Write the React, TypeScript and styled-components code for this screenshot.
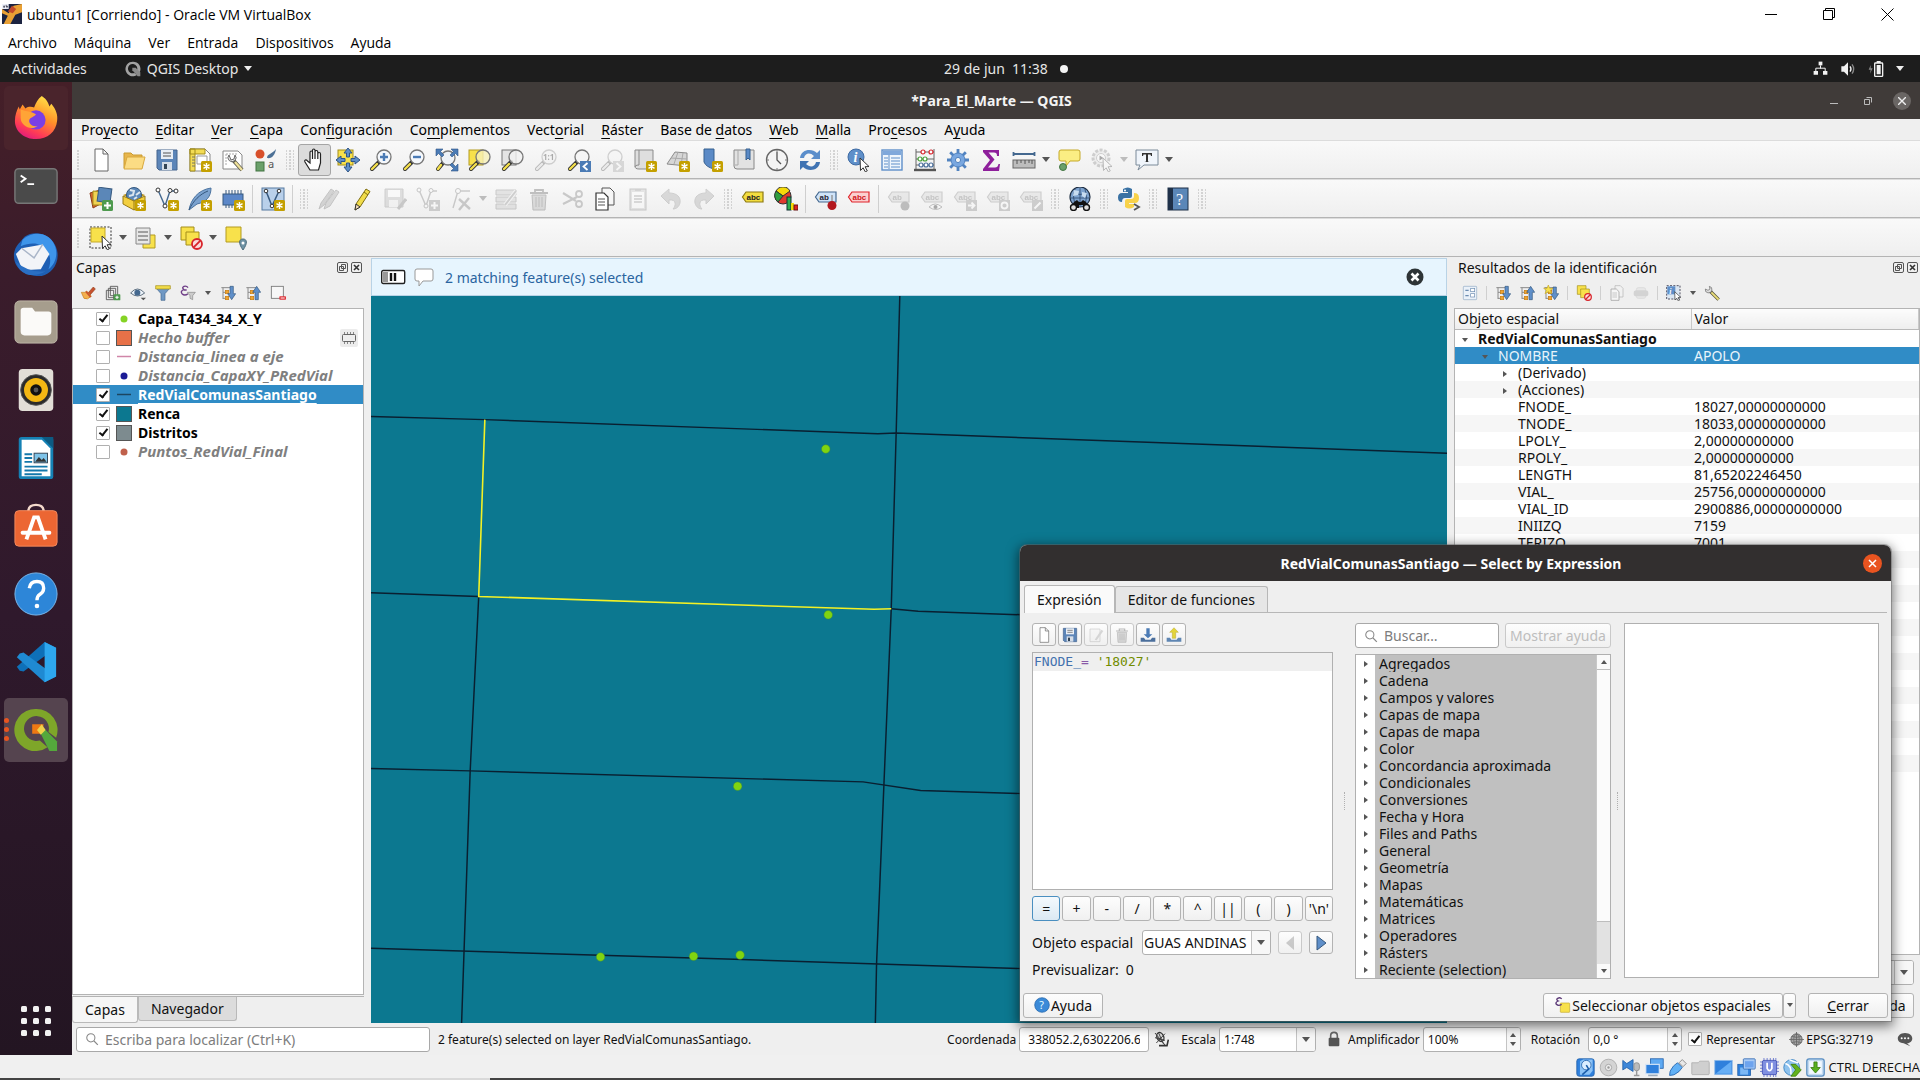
import React from "react";
import styled, { createGlobalStyle, css } from "styled-components";

const UI = `"Noto Sans", "Open Sans", sans-serif`;
const WIN = `"Open Sans", "Noto Sans", sans-serif`;

const GlobalStyle = createGlobalStyle`
  *, *::before, *::after { box-sizing: border-box; }
  body { margin: 0; background: #efefef; font-family: ${UI}; font-size: 14px; color: #111; }
  button, input, select { font: inherit; color: inherit; margin: 0; }
  button { padding: 0; border: 0; background: none; }
  svg { display: block; flex: none; }
`;

/* ------------------------------------------------------------------ icons */

const badge = (
  <g>
    <rect x="13" y="13" width="11" height="11" rx="1.5" fill="#c4a000" />
    <path d="M18.5 15v7M15.5 16.7l6 3.6M21.5 16.7l-6 3.6" stroke="#fff" strokeWidth="1.4" />
  </g>
);
const lens = (fill: string, cx = 15, cy = 9) => (
  <g>
    <path d={`M${cx - 5} ${cy + 5}L3 21`} stroke="#333" strokeWidth="4" strokeLinecap="round" />
    <path d={`M${cx - 7} ${cy + 7}L3 21`} stroke="#f5e04c" strokeWidth="2.4" strokeLinecap="round" />
    <circle cx={cx} cy={cy} r="7" fill={fill} stroke="#777" strokeWidth="1.3" />
  </g>
);
const tag = (fill: string, stroke: string, color: string, text = "abc") => (
  <g>
    <path d="M5 5H22V15H5L1.500 10z" fill={fill} stroke={stroke} strokeWidth="1.200" />
    <text x="5.500" y="13" fontSize="8" fontWeight="700" fill={color} fontFamily="Liberation Sans, sans-serif">{text}</text>
  </g>
);
const cursor = <path d="M13 10l9 8.5-4 .3 2.3 4-2 1-2.2-4-2.6 2.7z" fill="#fff" stroke="#333" />;
const treeLines = (
  <g stroke="#8a8a8a" fill="none">
    <path d="M2 4h15M4.500 4v17M4.500 11h4M4.500 20h4" strokeWidth="1.500" />
    <rect x="8" y="8" width="5" height="5" fill="#f0a430" stroke="#c57b10" />
    <rect x="8" y="17" width="5" height="5" fill="#f0a430" stroke="#c57b10" />
  </g>
);
const forbid = (
  <g>
    <circle cx="18" cy="18" r="5" fill="#fbdada" stroke="#d8232a" strokeWidth="1.8" />
    <path d="M14.600 21.400l6.800-6.800" stroke="#d8232a" strokeWidth="1.8" />
  </g>
);

const glyphs: Record<string, React.ReactNode> = {
  newFile: <path d="M6 1h8l5 5v17H6zM14 1v5h5" fill="#fff" stroke="#666" />,
  folder: <><path d="M2 5h7l2 2h9v13H2z" fill="#e8b64c" stroke="#c99a2e" /><path d="M5 9h18l-3 12H2z" fill="#fbdc84" stroke="#d9a93e" /></>,
  save: <><path d="M2 2h20v20H4l-2-2z" fill="#5c85b8" stroke="#44648e" /><rect x="6" y="2" width="12" height="9" fill="#e9eef5" /><path d="M8 5h8M8 8h8" stroke="#555" /><rect x="7" y="14" width="10" height="8" fill="#d5dde8" /><rect x="9" y="16" width="3" height="5" fill="#345" /></>,
  layoutNew: <><path d="M2 1h15l5 5v17H2z" fill="#fff" stroke="#888" /><path d="M2 1h5v22H2zM2 1h15v5H2z" fill="#f3dc55" stroke="#a48e1a" /><path d="M4 9h3M4 12h3M4 15h3M4 18h3" stroke="#776" /><path d="M9 8h10v8H9z" fill="#fff" stroke="#999" />{badge}</>,
  layoutManager: <><path d="M2 3h15l4 4v14H2z" fill="#fff" stroke="#888" /><path d="M5 6h11M5 6v12" stroke="#aaa" strokeDasharray="2 1" /><path d="M12 12l9 10" stroke="#5c5a4c" strokeWidth="4" /><path d="M14 14l7 8" stroke="#f0e29a" strokeWidth="2.400" /><path d="M8 7a4 4 0 1 0 6 0l-1 4-3 1z" fill="#eee" stroke="#666" /></>,
  style: <><circle cx="6" cy="6" r="4.500" fill="#d8502b" /><path d="M13 10c0-4 5-4 9-9-1 6-4 10-9 9z" fill="#4d7196" /><rect x="2" y="14" width="8" height="9" fill="#6aa06a" stroke="#427542" /><text x="14" y="20" fontSize="11" fill="#555" fontFamily="Noto Sans">a</text></>,
  hand: <path d="M7 22l-5-8c-1-2 1-3 2.500-1L7 15V4.500c0-2 2.500-2 2.500 0V2.500c0-2 2.500-2 2.500 0V4c0-2 2.800-2 2.800 0v2c0-2 2.700-2 2.700 0v9l-2 7zM9.500 4v7M12 3v8M14.800 5v6" fill="#fff" stroke="#222" strokeWidth="1.200" />,
  panSelection: <><rect x="2" y="2" width="15" height="15" fill="#f8e14b" stroke="#a48e1a" /><path d="M12 0l4 5h-2.500v4h-3V5H8zM24 12l-5 4v-2.500h-4v-3h4V8zM12 24l-4-5h2.500v-4h3v4H16zM0 12l5-4v2.500h4v3H5V16z" fill="#5f8fc9" stroke="#2f5686" /></>,
  zoomIn: <>{lens("#f5f8fc")}<path d="M15 5v8M11 9h8" stroke="#4b7bb5" strokeWidth="2.400" /></>,
  zoomOut: <>{lens("#f5f8fc")}<path d="M11 9h8" stroke="#4b7bb5" strokeWidth="2.400" /></>,
  zoomFull: <>{lens("#eef2f7", 13, 10)}<path d="M1 1h7L5.500 3.500 9 7 7 9 3.500 5.500 1 8zM23 1h-7l2.500 2.500L15 7l2 2 3.500-3.500L23 8zM23 23h-7l2.500-2.500L15 17l2-2 3.500 3.500L23 16z" fill="#4b7bb5" stroke="#2f5686" strokeWidth=".6" /></>,
  zoomSelection: <><rect x="1" y="2" width="14" height="15" fill="#f8e14b" stroke="#b39b20" />{lens("#f6f0b8cc")}</>,
  zoomLayer: <><rect x="1" y="2" width="14" height="15" fill="#e4e4e4" stroke="#777" />{lens("#f1f1f1cc")}</>,
  zoomNative: <>{lens("#f1f1f1")}<text x="9" y="12" fontSize="8" fontWeight="700" fontFamily="Noto Sans">1:1</text></>,
  zoomLast: <>{lens("#f5f5f5")}<rect x="13" y="13" width="11" height="11" fill="#4b7bb5" /><path d="M20.500 15l-4 3.500 4 3.500" stroke="#fff" strokeWidth="1.800" fill="none" /></>,
  zoomNext: <>{lens("#f5f5f5")}<rect x="13" y="13" width="11" height="11" fill="#8a9bb0" /><path d="M16.500 15l4 3.500-4 3.500" stroke="#fff" strokeWidth="1.800" fill="none" /></>,
  newMap: <><path d="M2 2h18v19H6c-3 0-4-1-4-3z" fill="#dedede" stroke="#8b8b8b" /><path d="M6 2v15c-3 0-4 1-4 2" fill="none" stroke="#8b8b8b" />{badge}</>,
  new3d: <><path d="M9 4l12 1v13L1 16z" fill="#d6d6d6" stroke="#8b8b8b" /><path d="M5 10l16 1M12 4L8 16M17 5l-2 12" stroke="#aaa" fill="none" />{badge}</>,
  bookmarkNew: <><path d="M5 1h10v20q-8-2-10-7z" fill="#5b8ac6" stroke="#37608f" />{badge}</>,
  bookmarks: <><path d="M2 2h20v19H5q-3 0-3-3z" fill="#e2e2e2" stroke="#888" /><path d="M6 2v15H3" stroke="#aaa" fill="none" /><path d="M14 1h4v11l-2-2-2 2z" fill="#5b8ac6" stroke="#37608f" /></>,
  clock: <><circle cx="12" cy="12" r="10.500" fill="#f4f4f4" stroke="#666" strokeWidth="1.300" /><path d="M12 4v8l4 4" fill="none" stroke="#555" strokeWidth="1.300" /><path d="M12 2v2M12 20v2M2 12h2M20 12h2" stroke="#777" /></>,
  refresh: <><path d="M2 10c1-9 12-10 17-5l3-3v9h-9l3-3c-4-4-9-3-10 2z" fill="#5b8ecb" /><path d="M22 14c-1 9-12 10-17 5l-3 3v-9h9l-3 3c4 4 9 3 10-2z" fill="#3f73b3" /></>,
  identify: <><circle cx="9" cy="9" r="8" fill="#5f8fc9" stroke="#3d6aa3" /><text x="6.500" y="14" fontSize="14" fontStyle="italic" fontWeight="700" fill="#fff" fontFamily="Liberation Serif">i</text>{cursor}</>,
  table: <><rect x="2" y="2" width="20" height="20" fill="#eef5fc" stroke="#5f8fc9" strokeWidth="1.400" /><path d="M3 3h18v4H3z" fill="#7fa8db" /><path d="M9 7v14" stroke="#5f8fc9" /><path d="M4 10h4M4 13h4M4 16h4M4 19h4M11 10h9M11 13h9M11 16h9M11 19h9" stroke="#5f8fc9" /></>,
  abacus: <><path d="M3 1v21M21 1v21M3 4h18M3 11h18M3 17h18" stroke="#666" fill="none" /><path d="M1 22h22" stroke="#555" strokeWidth="2.400" /><g fill="#fff" strokeWidth="1.200"><g stroke="#d8232a"><circle cx="10" cy="4" r="2" /><circle cx="18" cy="4" r="2" /></g><g stroke="#4aa13a"><circle cx="7" cy="11" r="2" /><circle cx="12" cy="11" r="2" /></g><g stroke="#4a6f9c"><circle cx="8" cy="17" r="2" /><circle cx="13" cy="17" r="2" /><circle cx="18" cy="17" r="2" /></g></g></>,
  gear: <><g stroke="#5183c0" strokeWidth="2.800"><path d="M12 1v22M1 12h22M4.200 4.200l15.600 15.600M19.800 4.200L4.200 19.800" /></g><circle cx="12" cy="12" r="7" fill="#79a7e0" stroke="#5183c0" /><circle cx="12" cy="12" r="2.600" fill="#f6f6f6" stroke="#5183c0" /></>,
  sigma: <path d="M4 2h16v6h-2c0-3-1-3.500-3-3.500H9.500l6 7-6.500 8h7c2 0 3-1 3.500-3.500H21L20 23H4v-2l7-9-7-8z" fill="#8e1f9b" />,
  ruler: <><path d="M1 6h22M1.500 4v4M22.500 4v4" stroke="#44688f" strokeWidth="1.800" /><rect x="1" y="12" width="22" height="8" fill="#bdbdbd" stroke="#666" /><path d="M5 12v4M9 12v3M13 12v4M17 12v3M20 12v4" stroke="#555" /></>,
  mapTip: <><path d="M4 2h17q2 0 2 2v7q0 2-2 2h-8l-4 5v-5H4q-2 0-2-2V4q0-2 2-2z" fill="#fbee83" stroke="#c5a929" /><circle cx="6" cy="19" r="3.500" fill="#6aa06a" stroke="#427542" /></>,
  action: <><circle cx="11" cy="10" r="8" fill="#ddd" stroke="#777" strokeWidth="3" strokeDasharray="3 1.500" /><circle cx="11" cy="10" r="4.500" fill="#fff" stroke="#777" /><path d="M9.500 7.500l4 2.500-4 2.500z" />{cursor}</>,
  annotation: <><path d="M1 2h22v15H9l-6 5 2-5H1z" fill="#f0f5fb" stroke="#7b8a99" /><path d="M7 5h10v3h-1l-.5-1.500h-2.500v7l1.500.5h-5l1.500-.5v-7H8.500L8 8H7z" fill="#333" /></>,
  layers: <><path d="M1 6l10-3 4 12-11 6z" fill="#d5632d" stroke="#8e3f1a" /><path d="M4 4l12 1v13H4z" fill="#f0d252" stroke="#a48e1a" /><path d="M9 1h13v14H9z" fill="#5b87b8" stroke="#36597f" transform="rotate(8 15 8)" /><rect x="13" y="13" width="11" height="11" rx="1.500" fill="#4e9a4e" /><path d="M18.500 15v7M15 18.500h7" stroke="#fff" strokeWidth="2" /></>,
  geopackage: <><path d="M1 8l11-4 11 4-11 6z" fill="#b8921c" /><circle cx="12" cy="8" r="7.500" fill="#5b87b8" stroke="#36597f" /><path d="M8 3l4 1-1 4-4 1M14 8l4-3M12 12l3-2" stroke="#dde6ee" strokeWidth="2" fill="none" /><path d="M1 9l11 5 11-5v8l-11 6-11-6z" fill="#f3cf3f" stroke="#987a14" /><path d="M12 14v9" stroke="#987a14" />{badge}</>,
  shapefile: <><path d="M3 3l7 16 5-15h6" fill="none" stroke="#44688f" strokeWidth="1.400" /><g fill="#fff" stroke="#333"><circle cx="3" cy="3" r="2" /><circle cx="15" cy="3.500" r="2" /><circle cx="21" cy="4" r="2" /><circle cx="10" cy="19" r="2" /></g>{badge}</>,
  feather: <><path d="M1 23C3 12 10 3 23 1c0 8-4 14-14 16z" fill="#7ba2cf" stroke="#4b739f" /><path d="M1 23C5 14 12 7 20 4" stroke="#36597f" fill="none" />{badge}</>,
  memory: <><path d="M5 3v18M8 3v18M11 3v18M14 3v18M17 3v18M20 3v18" stroke="#36597f" /><rect x="2" y="7" width="20" height="11" fill="#5b87c8" stroke="#36597f" />{badge}</>,
  virtual: <><rect x="1" y="1" width="22" height="22" fill="#b9d0ea" stroke="#55789f" /><path d="M5 4l6 15 7-15" fill="none" stroke="#36597f" strokeWidth="1.500" /><g fill="#fff" stroke="#333"><circle cx="5" cy="4" r="1.800" /><circle cx="18" cy="4" r="1.800" /><circle cx="11" cy="19" r="1.800" /></g>{badge}</>,
  pencils: <><path d="M2 22l2-6L14 2l3 2L7 18z" fill="#888" stroke="#555" /><path d="M7 22l2-6L19 3l3 2-9 14z" fill="#999" stroke="#555" /></>,
  pencil: <><path d="M6 17L16 2l4 2.500L10 20l-5 3z" fill="#f1dc4a" stroke="#7e6d12" /><path d="M14 5l4 3" stroke="#7e6d12" /><path d="M6 17l4 3-5 3z" fill="#f4dcb8" stroke="#333" /></>,
  saveEdits: <><path d="M2 2h18v18H2z" fill="#aaa" stroke="#777" /><rect x="5" y="3" width="12" height="7" fill="#fff" /><rect x="6" y="13" width="9" height="7" fill="#eee" /><path d="M15 22l8-10" stroke="#666" strokeWidth="3" /></>,
  addLine: <><path d="M3 3l7 16 5-15h6" fill="none" stroke="#666" strokeWidth="1.400" /><g fill="#fff" stroke="#555"><circle cx="3" cy="3" r="2" /><circle cx="15" cy="3.500" r="2" /><circle cx="10" cy="19" r="2" /></g><rect x="13" y="13" width="11" height="11" fill="#777" /><path d="M18.500 15v7M15 18.500h7" stroke="#fff" strokeWidth="2" /></>,
  vertex: <><path d="M4 21L9 4h12" fill="none" stroke="#666" strokeWidth="1.400" /><circle cx="9" cy="4" r="2.500" fill="#fff" stroke="#555" /><path d="M10 12l11 10M20 11l-10 12" stroke="#666" strokeWidth="2.400" /></>,
  modify: <><path d="M2 3h20v5H2zM2 10h20v5H2zM2 17h20v5H2z" fill="#bba" stroke="#665" /><path d="M11 18L22 4" stroke="#eee" strokeWidth="4" /><path d="M11 18L22 4" stroke="#777" strokeWidth="2" /></>,
  trash: <><path d="M3 6h18M8 6V3h8v3" fill="none" stroke="#833" strokeWidth="1.800" /><path d="M5 8h14l-1 15H6z" fill="#b99" stroke="#833" /><path d="M9 10v10M12 10v10M15 10v10" stroke="#833" /></>,
  cut: <><path d="M3 6l13 8M3 17l14-7" stroke="#666" strokeWidth="2.200" /><circle cx="19" cy="7" r="3" fill="none" stroke="#666" strokeWidth="1.800" /><circle cx="19" cy="17" r="3" fill="none" stroke="#666" strokeWidth="1.800" /></>,
  copy: <><path d="M9 1h8l4 4v13H9z" fill="#f6f6f6" stroke="#555" /><path d="M3 6h8l4 4v13H3z" fill="#fff" stroke="#333" strokeWidth="1.200" /><path d="M5 12h7M5 15h7M5 18h7" stroke="#555" /></>,
  paste: <><rect x="4" y="2" width="16" height="21" fill="#bbb" stroke="#666" /><rect x="6" y="5" width="12" height="16" fill="#fff" /><path d="M8 9h8M8 12h8M8 15h8M9 3h6" stroke="#777" strokeWidth="1.500" /></>,
  undo: <path d="M2 9l8-7v4c8 0 12 4 11 10-1 4-4 6-7 6 3-3 4-10-4-9v4z" fill="#999" stroke="#777" />,
  redo: <path d="M22 9l-8-7v4C6 6 2 10 3 16c1 4 4 6 7 6-3-3-4-10 4-9v4z" fill="#999" stroke="#777" />,
  label: tag("#f3dd3f", "#8d7a12", "#222"),
  diagram: <><circle cx="9" cy="9" r="8" fill="#e03a2e" stroke="#333" /><path d="M9 9L2 4a8 8 0 0 1 14 0z" fill="#f5d90a" stroke="#333" /><path d="M9 9L2 4a8 8 0 0 0 2 11z" fill="#2f9e3f" stroke="#333" /><rect x="13" y="10" width="4" height="13" fill="#2fae4f" stroke="#133" /><rect x="17" y="16" width="3" height="7" fill="#f5d90a" /><rect x="20" y="18" width="4" height="5" fill="#d22" stroke="#611" /></>,
  labelPin: <>{tag("#cfe3f8", "#44688f", "#223", "ab")}<path d="M18 8v8" stroke="#999" strokeWidth="1.500" /><circle cx="18" cy="18.500" r="4.500" fill="#b3181f" /></>,
  labelRed: tag("#fbd0d0", "#e0232a", "#d0151c"),
  labelPinOff: <>{tag("#ccc", "#777", "#555", "ab")}<circle cx="18" cy="19" r="4.500" fill="#833" /></>,
  labelEye: <>{tag("#ccc", "#777", "#555")}<path d="M9 20q6-6 13 0q-6 5-13 0z" fill="#fff" stroke="#444" /><circle cx="15.500" cy="20" r="2" /></>,
  labelMove: <>{tag("#ccc", "#777", "#555")}<rect x="13" y="13" width="11" height="11" fill="#777" /><path d="M15 18.500h6M18.500 15.500l3 3-3 3" stroke="#fff" strokeWidth="1.800" fill="none" /></>,
  labelRotate: <>{tag("#ccc", "#777", "#555")}<rect x="13" y="13" width="11" height="11" fill="#777" /><circle cx="18.500" cy="18.500" r="3" stroke="#fff" strokeWidth="1.800" fill="none" /></>,
  labelEdit: <>{tag("#ccc", "#777", "#555")}<rect x="13" y="13" width="11" height="11" fill="#777" /><path d="M15.500 21.500l6-6" stroke="#fff" strokeWidth="2" /></>,
  metasearch: <><circle cx="12" cy="10" r="10" fill="#7ea3cf" stroke="#1f2f44" strokeWidth="1.200" /><path d="M5 6q7 3 14 0M3 11h18M12 1v18M7 2q-3 8 0 16M17 2q3 8 0 16" stroke="#2d4a6e" strokeWidth=".8" fill="none" /><path d="M6 3l5 1-1 4-5 1zM14 5l5 1-2 5-3-2z" fill="#c8dcf0" /><path d="M6 15l3-2 2 2h2l2-2 3 2 4 6h-7v-3h-4v3H2z" fill="#111" /><circle cx="5.500" cy="20.500" r="3" fill="#ddd" stroke="#111" strokeWidth="1.400" /><circle cx="18.500" cy="20.500" r="3" fill="#ddd" stroke="#111" strokeWidth="1.400" /></>,
  python: <><path d="M6 2q5-3 9 0v7q0 2-2 2H8q-3 0-3 4-4 0-4-4.500T5 6h6V5H6z" fill="#3a72a4" /><path d="M17 6q5 0 5 5t-4 5h-6v1h5v3q-5 3-9 0v-6q0-2 2-2h4q3 0 3-3z" fill="#f8d24a" /><circle cx="8" cy="3.500" r="1" fill="#fff" /><path d="M17 17l5 3-5 3" fill="none" stroke="#555" strokeWidth="1.800" /></>,
  helpBook: <><rect x="2" y="1" width="20" height="22" fill="#5b87b8" stroke="#1f3149" /><rect x="2" y="1" width="5" height="22" fill="#1f3149" /><text x="10" y="18" fontSize="16" fill="#fff" fontFamily="Liberation Serif">?</text></>,
  selectRect: <><path d="M1 1h21v21H1z" fill="none" stroke="#333" strokeDasharray="2 1.500" /><path d="M2 2h14v14H2z" fill="#f8e14b" stroke="#c5a929" />{cursor}</>,
  selectForm: <><path d="M9 9h12v13H9z" fill="#f8e14b" stroke="#b39b20" /><path d="M2 2h14v16H2z" fill="#e7e7e7" stroke="#888" /><path d="M4 6h10M4 10h10M4 14h10" stroke="#888" strokeWidth="1.600" /></>,
  deselect: <><path d="M2 1h13v13H2z" fill="#f8e14b" stroke="#a48e1a" /><path d="M7 6h13v13H7z" fill="#f8e14b" stroke="#a48e1a" />{forbid}</>,
  selectPin: <><path d="M2 1h15v15H2z" fill="#f8e14b" stroke="#b39b20" /><path d="M19 24c-5-7-4-11 0-11s5 4 0 11z" fill="#6f93a5" stroke="#4b6b7c" /><circle cx="19" cy="17" r="1.500" fill="#fff" /></>,
  brush: <><path d="M12 12l8-9 3 3-8 9z" fill="#c8502d" stroke="#8e3f1a" /><path d="M2 11q6 1 8-2l7 8q-6 6-11 3z" fill="#f4b04e" stroke="#c57b10" /><path d="M9 10l7 8" stroke="#c8502d" strokeWidth="2.500" /></>,
  addGroup: <><path d="M2 8h11v14H2zM5 5h11v14H5zM8 2h11v14H8z" fill="#eee" stroke="#555" strokeWidth="1.300" /><rect x="13" y="14" width="10" height="9" rx="1" fill="#4e9a4e" /><path d="M18 16v5M15.500 18.500h5" stroke="#fff" strokeWidth="1.600" /></>,
  eye: <><path d="M1 12q10-12 21 0q-11 9-21 0z" fill="#eef4fa" stroke="#567" strokeWidth="1.400" /><circle cx="11" cy="11.500" r="4.500" fill="#44688f" /><path d="M16 19h8l-4 4z" fill="#555" /></>,
  filter: <><path d="M2 5h20l-7 8v10H9V13z" fill="#6f98c4" stroke="#44688f" /><path d="M1 1h22v5H1z" fill="#f1dc4a" stroke="#a48e1a" /></>,
  epsilon: <><path d="M12 4q-2-3-6-2-4 2 0 5-6 2-3 6 4 4 9 0M6 7.500h4" fill="none" stroke="#6d3c86" strokeWidth="2" /><path d="M11 11h12l-4 5v6l-4-2v-4z" fill="#ccc" stroke="#888" /></>,
  expand: <>{treeLines}<path d="M15 2h5v11h3.500l-6 9-6-9H15z" fill="#5f8fc9" stroke="#36597f" /></>,
  collapse: <>{treeLines}<path d="M15 22h5V11h3.500l-6-9-6 9H15z" fill="#5f8fc9" stroke="#36597f" /></>,
  expandNew: <>{treeLines}<path d="M15 3h5v10h3.500l-6 9-6-9H15z" fill="#5f8fc9" stroke="#36597f" /><path d="M8 0l2 5 5 0-4 3 2 5-5-3-5 3 2-5-4-3h5z" fill="#f8e14b" stroke="#c5a929" /></>,
  remove: <><rect x="2" y="2" width="18" height="18" fill="#f7f7f7" stroke="#777" strokeWidth="1.300" /><rect x="14" y="17" width="10" height="5" rx="1" fill="#e0353b" /><path d="M16 19.500h6" stroke="#fff" strokeWidth="1.400" /></>,
  form: <><rect x="2" y="2" width="20" height="20" rx="1" fill="#eaf1f9" stroke="#93aac4" /><path d="M5 8h5M5 16h5" stroke="#6b8bb0" strokeWidth="2" /><rect x="13" y="5" width="6" height="5" fill="#fff" stroke="#6b8bb0" /><rect x="13" y="13" width="6" height="5" fill="#fff" stroke="#6b8bb0" /></>,
  print: <><rect x="5" y="4" width="14" height="16" rx="3" fill="#ddd" stroke="#aaa" /><rect x="1" y="8" width="22" height="9" rx="4" fill="#aaa" /></>,
  identifyMode: <><path d="M1 1h20v20H1z" fill="#dbe6f2" stroke="#556" strokeWidth="1.500" strokeDasharray="3 2" /><path d="M2 2h12v12H2z" fill="#5f8fc9" /><text x="5" y="13" fontSize="12" fontStyle="italic" fontWeight="700" fill="#fff" fontFamily="Liberation Serif">i</text>{cursor}</>,
  wrench: <><path d="M9 9l13 13" stroke="#59553a" strokeWidth="5" /><path d="M11 11l11 11" stroke="#ece07c" strokeWidth="2.800" /><path d="M2 6a5 5 0 1 0 6-4l1 4-3 2z" fill="#ddd" stroke="#666" /></>,
  download: <><path d="M9.500 2h5v9h4L12 17l-6.500-6h4z" fill="#4b7bb5" /><path d="M1 16h5l2 3h8l2-3h5v6H1z" fill="#4b6f9c" /></>,
  upload: <><path d="M9.500 17h5V8h4L12 1 5.500 8h4z" fill="#e3d43a" stroke="#a99c19" strokeWidth=".6" /><path d="M1 16h5l2 3h8l2-3h5v6H1z" fill="#5f86b3" /></>,
  edit: <><path d="M3 3h15v19H3z" fill="#eee" stroke="#777" /><path d="M10 19L20 4l3 2-10 14z" fill="#999" /></>,
  search: <><circle cx="10" cy="10" r="7" fill="none" stroke="#888" strokeWidth="1.800" /><path d="M15 15l7 7" stroke="#888" strokeWidth="2" /></>,
  help: <><circle cx="12" cy="12" r="11" fill="#3b8ad8" stroke="#1d5fa5" /><text x="8" y="18" fontSize="16" fill="#e8ffff" fontFamily="Noto Sans">?</text></>,
  expSelect: <><rect x="8" y="9" width="14" height="14" rx="1" fill="#f8e14b" stroke="#c5a929" /><path d="M10 3q-2-3-6-1-3 2 1 4-5 2-3 5 3 3 8 0" fill="none" stroke="#5c3a78" strokeWidth="2" /></>,
  bug: <><ellipse cx="11" cy="9" rx="5" ry="7" fill="#ddd" stroke="#333" strokeWidth="2" transform="rotate(-25 11 9)" /><path d="M3 3l15 18M18 4L5 18M3 10l15 4M8 2l8 18" stroke="#444" strokeWidth="1.500" /><path d="M9 22h12l2-9" stroke="#333" strokeWidth="2.400" fill="none" /></>,
  lock: <><path d="M7 11V7q0-5 5-5t5 5v4" fill="none" stroke="#666" strokeWidth="2.400" /><rect x="4" y="10" width="16" height="13" rx="1.500" fill="#555" /></>,
  crs: <><circle cx="12" cy="12" r="9" fill="#a5a5a5" stroke="#666" strokeWidth="1.600" /><path d="M0 12h24M12 0v24M4 7q8 3 16 0M4 17q8-3 16 0" stroke="#666" fill="none" strokeWidth="1.300" /><ellipse cx="12" cy="12" rx="4.500" ry="9" fill="none" stroke="#666" /></>,
  chat: <><path d="M12 3c14 0 14 15 3 15.500l5 4.500-10-4.500C-3 18-1 3 12 3z" fill="#555" /><g fill="#fff"><circle cx="7" cy="11" r="1.500" /><circle cx="12" cy="11" r="1.500" /><circle cx="17" cy="11" r="1.500" /></g></>,
  network: <g fill="#f2f2f2"><rect x="9" y="1" width="6" height="6" /><rect x="1" y="16" width="7" height="6" /><rect x="16" y="16" width="7" height="6" /><path d="M12 7v5M4.500 16v-4.500h15V16" stroke="#f2f2f2" strokeWidth="1.600" fill="none" /></g>,
  volume: <><path d="M2 8h4l6-6v20l-6-6H2z" fill="#f2f2f2" /><path d="M15 8q3 4 0 8" stroke="#f2f2f2" strokeWidth="2" fill="none" /><path d="M18 5q5 7 0 14" stroke="#888" strokeWidth="2" fill="none" /></>,
  battery: <><path d="M4 6L1 13h3l-1 6 4-8H4z" fill="#888" /><rect x="10" y="3" width="12" height="20" rx="1" fill="none" stroke="#f2f2f2" strokeWidth="2" /><path d="M13 6h6v14h-6zM13 0h6v3h-6z" fill="#f2f2f2" /></>,
  qgisGray: <><path d="M12 1a11 11 0 1 0 6 20l-4-3a7 7 0 1 1 4-4l4 3A11 11 0 0 0 12 1z" fill="#a3a3a3" /><path d="M11 10h5l7 7v6h-4l-8-9z" fill="#8a8a8a" /></>,
  vbox: <><rect width="24" height="24" fill="#1c2340" /><path d="M0 6l8 5 6-9 10-2v10l-8 3-6 11H2l5-10-7-3z" fill="#e9a034" /><path d="M7 9l5-7 5 4-4 5z" fill="#c2492b" /><rect x="0" y="0" width="8" height="6" fill="#eceff8" /><path d="M2 2v2h1v-2M5 1v2h2M6 2v3" stroke="#223" strokeWidth=".8" fill="none" /></>,
  hdd: <><rect x="1" y="1" width="22" height="22" rx="3" fill="#2f80dc" stroke="#1c5da8" /><path d="M5 21V4l4-2h12v14l-4 5z" fill="#8cc2f5" /><circle cx="13" cy="9" r="6" fill="#dceeff" stroke="#1c5da8" /><path d="M13 9l3 5-8 7" stroke="#1c5da8" strokeWidth="2" fill="none" /></>,
  disc: <><circle cx="12" cy="12" r="10.500" fill="#d4d4d4" stroke="#a5a5a5" /><circle cx="12" cy="12" r="4" fill="#eee" stroke="#999" /><circle cx="12" cy="12" r="1.500" fill="#999" /></>,
  audio: <><path d="M1 3l5 4 8-5v15l-8-5-5 3z" fill="#3c86d8" stroke="#1c5da8" /><rect x="15" y="6" width="7" height="10" rx="3" fill="#bbb" stroke="#888" /><path d="M18.500 16v6M15 22h7" stroke="#999" strokeWidth="1.800" /></>,
  display: <><rect x="7" y="1" width="16" height="12" fill="#5ea9f2" stroke="#1c5da8" /><rect x="1" y="8" width="17" height="12" fill="#2f80dc" stroke="#dbe8f7" strokeWidth="1.400" /><path d="M4 22h12" stroke="#9ab" strokeWidth="2" /></>,
  usb: <><path d="M2 22q-1-5 5-12l5-4 6 6-4 5Q7 23 2 22z" fill="#62b1f5" stroke="#1c5da8" /><path d="M14 6l4-4 5 5-4 4z" fill="#e8e8e8" stroke="#777" /></>,
  shared: <path d="M1 6h8l2-2h11q1 0 1 2v14q0 1-1 1H2q-1 0-1-1z" fill="#cfcfcf" stroke="#aaa" />,
  screen: <><rect x="1" y="3" width="22" height="18" fill="#2f80dc" stroke="#8cb8e8" /><path d="M2 20L22 4v16z" fill="#66aef5" /></>,
  windows: <><rect x="1" y="8" width="16" height="14" fill="#2f80dc" stroke="#1c5da8" /><path d="M4 12h10v9H4z" fill="#7cb8f5" /><rect x="8" y="1" width="15" height="13" rx="1" fill="#a9cbf5" stroke="#2f66b0" /><path d="M10 4h11v8H10z" fill="#6ea4ee" /></>,
  cpu: <><path d="M5 0v24M9 0v24M13 0v24M17 0v24M20 0v24M0 5h24M0 9h24M0 13h24M0 17h24" stroke="#5768c9" /><rect x="3" y="3" width="18" height="18" rx="2" fill="#8090e0" stroke="#3c4bb0" /><path d="M9 6v7q3 6 6 0V6" fill="none" stroke="#fff" strokeWidth="2.200" /></>,
  mouse: <><circle cx="11" cy="12" r="10" fill="#8fc3ee" stroke="#2a78bd" /><path d="M3 7q8 2 7 14M8 2q6 3 11 4" stroke="#fff" strokeWidth="2" fill="none" /><path d="M10 8h6l7 7-7 8h-6l6-8z" fill="#63b21e" stroke="#3c7a0c" /></>,
  capture: <><rect x="1" y="1" width="22" height="22" rx="3" fill="#c3daf0" stroke="#5b8fc2" strokeWidth="1.600" /><rect x="4" y="4" width="16" height="16" fill="#f2f8ff" /><path d="M10 5h4v7h4l-6 7-6-7h4z" fill="#58b020" stroke="#35790c" /></>,
};

const Icon = ({ name, size = 24 }: { name: string; size?: number }) => (
  <svg width={size} height={size} viewBox="0 0 24 24" aria-hidden="true">{glyphs[name]}</svg>
);

/* ------------------------------------------------------------ shared parts */

const Caret = styled.span<{ $dir?: "right" | "down" | "up"; $color?: string; $size?: number }>`
  display: inline-block;
  flex: none;
  width: 0;
  height: 0;
  border: ${({ $size = 4 }) => $size}px solid transparent;
  ${({ $dir = "down", $color = "#555", $size = 4 }) =>
    $dir === "right"
      ? css`border-left: ${$size + 1}px solid ${$color}; border-right: 0;`
      : $dir === "up"
      ? css`border-bottom: ${$size + 1}px solid ${$color}; border-top: 0;`
      : css`border-top: ${$size + 1}px solid ${$color}; border-bottom: 0;`}
`;

const Button = styled.button<{ $focus?: boolean }>`
  display: flex;
  align-items: center;
  justify-content: center;
  height: 25px;
  border: 1px solid ${({ $focus }) => ($focus ? "#4a8fc0" : "#b3b3b3")};
  border-radius: 3px;
  background: ${({ $focus }) => ($focus ? "linear-gradient(#f4f9fd, #dbe9f3)" : "linear-gradient(#fdfdfd, #f0f0f0)")};
  white-space: nowrap;
  &:disabled { color: #bdbdbd; border-color: #c9c9c9; }
  &:disabled svg { opacity: 0.35; filter: grayscale(1); }
`;

const Field = styled.input`
  min-width: 0;
  height: 25px;
  padding: 0 8px;
  border: 1px solid #b0b0b0;
  border-radius: 3px;
  background: #fff;
  outline: none;
  &::placeholder { color: #7d7d7d; opacity: 1; }
`;

const SearchBox = styled.label<{ $width: number }>`
  display: flex;
  align-items: center;
  width: ${({ $width }) => $width}px;
  height: 25px;
  padding-left: 8px;
  border: 1px solid #a8a8a8;
  border-radius: 3px;
  background: #fff;
  input { flex: 1; height: 23px; padding: 0 6px; border: 0; background: none; }
`;

const ComboShell = styled.span<{ $width?: number }>`
  display: flex;
  flex: ${({ $width }) => ($width ? "none" : 1)};
  width: ${({ $width }) => ($width ? `${$width}px` : "auto")};
  height: 25px;
  border: 1px solid #b0b0b0;
  border-radius: 3px;
  background: #fff;
  overflow: hidden;
  select, input {
    flex: 1;
    min-width: 0;
    appearance: none;
    border: 0;
    padding: 0 4px;
    background: none;
    outline: none;
  }
`;

const FeatureInput = styled.input`
  && { padding: 0 1px; }
`;

const ComboArrows = styled.span`
  display: flex;
  flex-direction: column;
  flex: none;
  align-items: center;
  justify-content: center;
  gap: 5px;
  width: 19px;
  border-left: 1px solid #c4c4c4;
  background: #f7f7f7;
`;

const SpinColumn = styled(ComboArrows)`
  width: 14px;
`;

const Check = styled.input.attrs({ type: "checkbox" })`
  appearance: none;
  flex: none;
  display: grid;
  place-items: center;
  width: 14px;
  height: 14px;
  border: 1px solid #b0b0b0;
  border-radius: 1px;
  background: #fff;
  &:checked::after {
    content: "";
    width: 5px;
    height: 9px;
    margin-bottom: 2px;
    border: solid #111;
    border-width: 0 2px 2px 0;
    transform: rotate(38deg);
  }
`;

/* -------------------------------------------------------- VirtualBox frame */

const Screen = styled.div`
  display: flex;
  flex-direction: column;
  min-height: 100vh;
  overflow: hidden;
`;

const HostTitle = styled.header`
  display: flex;
  align-items: center;
  gap: 5px;
  height: 28px;
  padding-left: 2px;
  background: #fff;
  font-family: ${WIN};
  color: #000;
`;

const HostControls = styled.div`
  display: flex;
  margin-left: auto;
  padding-right: 4px;
  button { display: grid; place-items: center; width: 58px; height: 28px; }
`;

const HostMenu = styled.nav`
  display: flex;
  align-items: center;
  gap: 17px;
  height: 27px;
  padding: 2px 8px 0;
  background: #fff;
  font-family: ${WIN};
  color: #000;
`;

const HostStatus = styled.footer`
  display: flex;
  align-items: center;
  justify-content: flex-end;
  gap: 4px;
  height: 23px;
  padding-top: 1px;
  background: #f0f0f0;
  font-family: ${WIN};
  font-size: 13px;
`;

const HostEdge = styled.div`
  height: 2px;
  background: linear-gradient(90deg, #444 60px, #d9d9d9 60px, #d9d9d9 490px, #444 490px);
`;

/* ------------------------------------------------------------ GNOME shell */

const TopBar = styled.header`
  display: grid;
  grid-template-columns: 1fr auto 1fr;
  align-items: center;
  height: 27px;
  padding: 0 16px 0 12px;
  background: #1d1d1d;
  color: #e6e6e6;
`;

const TopGroup = styled.div<{ $gap?: number; $end?: boolean }>`
  display: flex;
  align-items: center;
  gap: ${({ $gap = 6 }) => $gap}px;
  justify-content: ${({ $end }) => ($end ? "flex-end" : "flex-start")};
`;

const AppMenu = styled.button`
  display: flex;
  align-items: center;
  gap: 6px;
  margin-left: 32px;
`;

const Clock = styled.button`
  display: flex;
  align-items: center;
  gap: 12px;
  padding-left: 96px;
  white-space: pre;
`;

const Dot = styled.span`
  width: 8px;
  height: 8px;
  border-radius: 50%;
  background: #f4f4f4;
`;

const Desktop = styled.div`
  display: flex;
  flex: 1;
`;

const Dock = styled.nav`
  display: flex;
  flex-direction: column;
  flex: none;
  width: 72px;
  padding-top: 2px;
  background: linear-gradient(#451f28, #3a1c2b 20%, #2f192c 55%, #231522);
`;

const DockButton = styled.button<{ $tone?: "active" | "hover"; $last?: boolean }>`
  position: relative;
  display: grid;
  place-items: center;
  width: 64px;
  height: 64px;
  margin: 2px 4px;
  border-radius: 5px;
  background: ${({ $tone }) => ($tone === "active" ? "#55444f" : $tone === "hover" ? "#4a242c" : "none")};
  ${({ $last }) => $last && css`margin-top: auto;`}
`;

const Running = styled.span`
  position: absolute;
  left: 0;
  top: 20px;
  display: grid;
  gap: 4px;
  i { width: 5px; height: 5px; border-radius: 50%; background: #e95420; }
`;

const dockIcons: { name: string; tone?: "active" | "hover"; art: React.ReactNode }[] = [
  { name: "Firefox", tone: "hover", art: <><defs><linearGradient id="ff" x1=".8" y1="0" x2=".3" y2="1"><stop offset="0" stopColor="#ffe94a" /><stop offset=".45" stopColor="#ff9229" /><stop offset=".8" stopColor="#ff3b56" /><stop offset="1" stopColor="#e21c7c" /></linearGradient></defs><path d="M30 1c6 4 7 8 8 11l2-3c5 6 7 12 6 18-1 11-10 19-22 19S2 38 2 27c0-6 2-11 4-15l1 3 3-5 3 4c3-2 6-2 9-1 2-5 4-9 8-12z" fill="url(#ff)" /><circle cx="24" cy="26" r="10" fill="#7b3fe4" /><path d="M8 15c6 2 11 2 16 5-2 3-6 3-7 6-1 4 4 8 9 6-7 6-18 0-18-8z" fill="#ffa436" /></> },
  { name: "Terminal", art: <><rect x="2" y="6" width="44" height="36" rx="4" fill="#4a4a4a" stroke="#777" strokeWidth="1.500" /><path d="M8 13l5 3.500-5 3.500M15 22h7" fill="none" stroke="#fff" strokeWidth="2" /></> },
  { name: "Thunderbird", art: <><path d="M12 6C24-2 42 4 46 20c3 14-6 25-16 27C14 48 0 40 1 24c1-6 3-9 6-12z" fill="#1e5fb4" /><path d="M10 9C20 0 36 1 42 12c6 10 3 22-5 28 3-8 2-14-1-18C30 12 20 11 8 16z" fill="#3e95ea" /><path d="M3 24l6-6 22-4 7 10-9 16-19 1z" fill="#f2f4f8" /><path d="M9 18l13 10 9-14" fill="none" stroke="#a9b5c8" strokeWidth="1.500" /><path d="M3 32q14 12 31 10-10 6-20 3Q6 42 3 32z" fill="#2a6fc4" /></> },
  { name: "Archivos", art: <><rect x="2" y="2" width="44" height="44" rx="5" fill="#a69d8d" stroke="#c0b8a9" /><path d="M8 12q0-3 3-3h9l3 4h14q3 0 3 3v18q0 4-4 4H12q-4 0-4-4z" fill="#fbfaf8" /></> },
  { name: "Rhythmbox", art: <><rect x="6" y="2" width="36" height="44" rx="4" fill="#e2ded7" /><circle cx="24" cy="24" r="16" fill="#2b2b2b" stroke="#555" /><circle cx="24" cy="24" r="12.500" fill="#f3b713" /><circle cx="24" cy="24" r="6" fill="#111" /><circle cx="24" cy="24" r="2.500" fill="#555" /></> },
  { name: "LibreOffice Writer", art: <><rect x="6" y="2" width="36" height="44" rx="3" fill="#1581b4" /><path d="M9 5h21l9 9v29H9z" fill="#fff" /><path d="M30 2h12v12z" fill="#0c5a82" /><path d="M12 20h8M12 24h8M12 28h8M12 33h24M12 37h24M12 41h18" stroke="#1478ab" strokeWidth="2" /><rect x="22" y="19" width="14" height="10" fill="#7fc3e8" stroke="#345" /><path d="M23 28l4-5 3 3 2-2 3 4z" fill="#333" /></> },
  { name: "Software", art: <><path d="M16 9q0-7 8-7t8 7" fill="none" stroke="#f3d9cb" strokeWidth="2.500" /><rect x="2" y="8" width="44" height="37" rx="4" fill="#ec6633" stroke="#f58a5e" /><path d="M14 38l8-23h4l8 23" stroke="#fff" strokeWidth="4" fill="none" /><path d="M10 31h28" stroke="#fff" strokeWidth="4" strokeLinecap="round" /></> },
  { name: "Ayuda", art: <><circle cx="24" cy="24" r="22" fill="#2d86d8" stroke="#7ab8ec" /><path d="M17 18q1-7 8-7t7 7q0 4-4 6.500-3 2-3 6" stroke="#fff" strokeWidth="3.500" fill="none" /><circle cx="25" cy="36.500" r="2.400" fill="#fff" /></> },
  { name: "Visual Studio Code", art: <><path d="M33 3L4 29l3 4 4 1L45 9z" fill="#0e70b8" /><path d="M33 45L4 19l3-4 4-1 34 25z" fill="#1f8ad2" /><path d="M33 3l12 6v30l-12 6z" fill="#2ea7ee" /></> },
  { name: "QGIS Desktop", tone: "active", art: <><path d="M24 2a22 22 0 1 0 12 40l-8-7a13 13 0 1 1 9-9l8 6A22 22 0 0 0 24 2z" fill="#7ea629" /><path d="M20 18h12l-2 10H20z" fill="#ee7913" /><path d="M28 26l4-4 14 14v10h-8z" fill="#54a83c" /><path d="M25 24l5-6 4 6-5 5z" fill="#f0d24a" /></> },
];

/* ------------------------------------------------------------ QGIS window */

const Qgis = styled.main`
  position: relative;
  display: flex;
  flex: 1;
  flex-direction: column;
  min-width: 0;
  background: #efefef;
`;

const QgisTitle = styled.header`
  display: grid;
  grid-template-columns: 1fr auto 1fr;
  align-items: center;
  height: 37px;
  padding-right: 9px;
  background: #403b39;
  color: #f3f3f3;
  font-weight: 700;
`;

const TitleControls = styled.div`
  grid-column: 3;
  display: flex;
  justify-content: flex-end;
  gap: 16px;
  button { display: grid; place-items: center; width: 18px; height: 18px; border-radius: 50%; }
  button:last-child { background: #6a6664; }
`;

const MenuBar = styled.nav`
  display: flex;
  align-items: center;
  gap: 17px;
  height: 21px;
  padding-left: 9px;
  color: #000;
  white-space: nowrap;
  u { text-underline-offset: 3px; }
`;

const Toolbar = styled.div`
  display: flex;
  align-items: center;
  height: 39px;
  border-top: 1px solid #dcdcdc;
  border-bottom: 1px solid #b4b4b4;
  background: linear-gradient(#f9f9f9, #efefef);
`;

const Handle = styled.span<{ $first?: boolean }>`
  flex: none;
  width: ${({ $first }) => ($first ? 12 : 16)}px;
  height: 22px;
  padding: 0 4px;
  background: radial-gradient(circle, #b0b0b0 1px, transparent 1px) center / 4px 3px;
  background-clip: content-box;
`;

const Sep = styled.span`
  flex: none;
  width: 1px;
  height: 28px;
  margin: 0 3px;
  background: #cfcfcf;
`;

const Tool = styled.button<{ $pressed?: boolean }>`
  display: grid;
  place-items: center;
  width: 33px;
  height: 32px;
  border: 1px solid ${({ $pressed }) => ($pressed ? "#a5a5a5" : "transparent")};
  border-radius: 3px;
  background: ${({ $pressed }) => ($pressed ? "#dcdcdc" : "none")};
  &:disabled svg { opacity: 0.3; filter: grayscale(1); }
`;

const DropArrow = styled.button`
  display: grid;
  place-items: center;
  width: 12px;
  height: 28px;
  &:disabled { opacity: 0.35; }
`;

/* Tokens: "|" handle, "/" separator, "v" arrow, "-name" disabled tool, "+name" pressed tool. */
const toolbars: string[] = [
  "newFile folder save layoutNew layoutManager style | +hand panSelection zoomIn zoomOut zoomFull zoomSelection zoomLayer -zoomNative zoomLast -zoomNext newMap new3d bookmarkNew bookmarks clock refresh | identify table abacus gear sigma ruler v mapTip -action -v annotation v",
  "layers geopackage shapefile feather memory / virtual / | -pencils pencil -saveEdits -addLine -vertex -v -modify -trash -cut copy -paste -undo -redo | label diagram / labelPin labelRed / -labelPinOff -labelEye -labelMove -labelRotate -labelEdit | metasearch | python | helpBook |",
  "selectRect v selectForm v deselect v selectPin",
];

const ToolRow = ({ spec }: { spec: string }) => (
  <Toolbar role="toolbar">
    <Handle $first />
    {spec.split(" ").map((t, i) => {
      if (t === "|") return <Handle key={i} />;
      if (t === "/") return <Sep key={i} />;
      if (t === "v" || t === "-v") return <DropArrow key={i} disabled={t === "-v"} aria-label="Más opciones"><Caret /></DropArrow>;
      const disabled = t[0] === "-";
      const pressed = t[0] === "+";
      const name = disabled || pressed ? t.slice(1) : t;
      return <Tool key={i} disabled={disabled} $pressed={pressed} aria-label={name}><Icon name={name} /></Tool>;
    })}
  </Toolbar>
);

const Work = styled.div`
  display: flex;
  flex: 1;
  min-height: 0;
  padding-top: 1px;
`;

const Panel = styled.section<{ $width: number; $after?: number }>`
  display: flex;
  flex: none;
  flex-direction: column;
  width: ${({ $width }) => $width}px;
  margin-right: ${({ $after = 0 }) => $after}px;
`;

const PanelTitle = styled.h2`
  display: flex;
  align-items: center;
  gap: 3px;
  height: 19px;
  margin: 0;
  padding: 0 2px 0 4px;
  font-size: 14px;
  font-weight: 400;
  span { flex: 1; }
`;

const MiniButton = styled.button`
  display: grid;
  place-items: center;
  width: 11px;
  height: 11px;
  border: 1px solid #555;
  border-radius: 2px;
`;

const PanelTools = styled.div<{ $gap: number }>`
  display: flex;
  align-items: center;
  gap: ${({ $gap }) => $gap}px;
  height: 31px;
  padding-left: 8px;
  button { display: grid; place-items: center; }
  button:disabled svg { opacity: 0.4; filter: grayscale(1); }
`;

const PanelSep = styled.span`
  width: 1px;
  height: 14px;
  background: #cfcfcf;
`;

const LayerTree = styled.ul`
  flex: 1;
  margin: 0;
  padding: 0;
  border: 1px solid #b4b4b4;
  background: #fff;
  list-style: none;
`;

const LayerRow = styled.li<{ $selected?: boolean }>`
  height: 19px;
  padding: 0 5px 0 23px;
  background: ${({ $selected }) => ($selected ? "#308cc6" : "none")};
  label { display: flex; align-items: center; height: 19px; }
`;

const Swatch = styled.span`
  display: grid;
  place-items: center;
  flex: none;
  width: 16px;
  margin: 0 6px;
`;

const LayerName = styled.span<{ $on: boolean; $selected?: boolean }>`
  flex: 1;
  font-size: ${({ $on }) => ($on ? 14 : 15)}px;
  line-height: 19px;
  font-weight: 700;
  white-space: nowrap;
  font-style: ${({ $on }) => ($on ? "normal" : "italic")};
  color: ${({ $on, $selected }) => ($selected ? "#fff" : $on ? "#000" : "#7f7f7f")};
  text-decoration: ${({ $selected }) => ($selected ? "underline" : "none")};
  text-underline-offset: 3px;
`;

const layers: { name: string; on: boolean; kind: "dot" | "line" | "fill"; color: string; selected?: boolean; temp?: boolean }[] = [
  { name: "Capa_T434_34_X_Y", on: true, kind: "dot", color: "#85d325" },
  { name: "Hecho buffer", on: false, kind: "fill", color: "#e77148", temp: true },
  { name: "Distancia_linea a eje", on: false, kind: "line", color: "#d086a8" },
  { name: "Distancia_CapaXY_PRedVial", on: false, kind: "dot", color: "#1c1c96" },
  { name: "RedVialComunasSantiago", on: true, kind: "line", color: "#1c4660", selected: true },
  { name: "Renca", on: true, kind: "fill", color: "#0c7890" },
  { name: "Distritos", on: true, kind: "fill", color: "#7d8b8f" },
  { name: "Puntos_RedVial_Final", on: false, kind: "dot", color: "#c0614c" },
];

const DockTabs = styled.div`
  display: flex;
  align-items: flex-start;
  height: 27px;
  margin-top: 1px;
  border-top: 1px solid #b4b4b4;
`;

const DockTab = styled.button<{ $active?: boolean }>`
  height: ${({ $active }) => ($active ? 26 : 24)}px;
  padding: 0 12px;
  border: 1px solid #b9b9b9;
  border-top: 0;
  border-radius: 0 0 3px 3px;
  background: ${({ $active }) => ($active ? "#f6f6f6" : "#dcdcdc")};
`;

const Canvas = styled.section`
  display: flex;
  flex: 1;
  flex-direction: column;
  min-width: 0;
`;

const MessageBar = styled.div`
  display: flex;
  align-items: center;
  gap: 8px;
  flex: none;
  height: 38px;
  padding: 0 22px 0 9px;
  border: 1px solid #b9d3e6;
  background: #e7f5fe;
  color: #2a64a0;
  span { flex: 1; padding-left: 3px; }
`;

const MapArea = styled.div`
  position: relative;
  flex: 1;
  background: #0c7890;
  svg { position: absolute; inset: 0; width: 100%; height: 100%; }
`;

const ResultTable = styled.table`
  width: 100%;
  border-collapse: collapse;
  table-layout: fixed;
  th {
    height: 20px;
    padding: 0 3px;
    line-height: 18px;
    border-right: 1px solid #c9c9c9;
    border-bottom: 1px solid #b9b9b9;
    background: linear-gradient(#fcfcfc, #eeeeee);
    font-weight: 400;
    text-align: left;
  }
  th:first-child { width: 236px; }
  td { height: 17px; padding: 0 3px; line-height: 17px; white-space: nowrap; }
  tbody tr:nth-child(even) { background: #f6f6f6; }
`;

const ResultRow = styled.tr<{ $depth: number; $bold?: boolean; $selected?: boolean }>`
  &&&& { ${({ $selected }) => $selected && css`background: #308cc6; color: #e8f4fb;`} }
  td:first-child {
    padding-left: ${({ $depth }) => 4 + $depth * 20}px;
    font-weight: ${({ $bold }) => ($bold ? 700 : 400)};
  }
`;

const Twist = styled.span`
  display: inline-grid;
  place-items: center;
  width: 12px;
  height: 12px;
  margin-right: 7px;
  vertical-align: middle;
`;

const ResultBox = styled.div`
  flex: 1;
  border: 1px solid #b4b4b4;
  background: #fff;
  overflow: hidden;
`;

const ResultFoot = styled.div`
  display: flex;
  flex-direction: column;
  align-items: flex-end;
  gap: 8px;
  padding: 5px 6px 5px 0;
`;

const results: [string, string, number, ("right" | "down")?][] = [
  ["RedVialComunasSantiago", "", 0, "down"],
  ["NOMBRE", "APOLO", 1, "down"],
  ["(Derivado)", "", 2, "right"],
  ["(Acciones)", "", 2, "right"],
  ["FNODE_", "18027,00000000000", 2],
  ["TNODE_", "18033,00000000000", 2],
  ["LPOLY_", "2,00000000000", 2],
  ["RPOLY_", "2,00000000000", 2],
  ["LENGTH", "81,65202246450", 2],
  ["VIAL_", "25756,00000000000", 2],
  ["VIAL_ID", "2900886,00000000000", 2],
  ["INIIZQ", "7159", 2],
  ["TERIZQ", "7001", 2],
  ...Array.from({ length: 13 }, () => ["", "", 2] as [string, string, number]),
];

const StatusBar = styled.footer`
  display: flex;
  align-items: center;
  flex: none;
  height: 32px;
  padding: 0 7px 0 4px;
  font-size: 12px;
  white-space: nowrap;
`;

const StatusMessage = styled.span`
  flex: 1;
  padding-left: 8px;
`;

const StatusGroup = styled.label<{ $gap?: number; $before?: number }>`
  display: flex;
  align-items: center;
  gap: ${({ $gap = 3 }) => $gap}px;
  margin-left: ${({ $before = 6 }) => $before}px;
`;

/* ------------------------------------------------------ expression dialog */

const Dialog = styled.div`
  position: absolute;
  right: 29px;
  bottom: 34px;
  display: flex;
  flex-direction: column;
  width: 871px;
  height: 476px;
  border-radius: 7px 7px 0 0;
  background: #efefef;
  box-shadow: 0 0 0 1px #6667, 0 3px 12px 2px #0008;
  overflow: hidden;
`;

const DialogTitle = styled.header`
  display: grid;
  grid-template-columns: 1fr auto 1fr;
  align-items: center;
  flex: none;
  height: 36px;
  padding-right: 9px;
  background: #322f2f;
  color: #fff;
  font-weight: 700;
  h1 { grid-column: 2; margin: 0; font-size: 14px; }
`;

const CloseRound = styled.button`
  justify-self: end;
  display: grid;
  place-items: center;
  width: 19px;
  height: 19px;
  border-radius: 50%;
  background: #e95420;
`;

const Tabs = styled.div`
  display: flex;
  align-items: flex-end;
  flex: none;
  height: 32px;
  margin: 0 4px;
  border-bottom: 1px solid #b7b7b7;
`;

const Tab = styled.button<{ $active?: boolean }>`
  height: ${({ $active }) => ($active ? 28 : 26)}px;
  margin-bottom: ${({ $active }) => ($active ? -1 : 0)}px;
  padding: 0 12px;
  border: 1px solid #b7b7b7;
  border-bottom: 0;
  border-radius: 3px 3px 0 0;
  background: ${({ $active }) => ($active ? "#fafafa" : "#e6e6e6")};
`;

const DialogBody = styled.div`
  display: flex;
  flex: 1;
  min-height: 0;
  padding: 10px 12px 0;
`;

const Editor = styled.div`
  display: flex;
  flex-direction: column;
  flex: none;
  width: 301px;
`;

const ButtonRow = styled.div<{ $gap?: number; $top?: number }>`
  display: flex;
  align-items: center;
  gap: ${({ $gap = 2 }) => $gap}px;
  margin-top: ${({ $top = 0 }) => $top}px;
`;

const SmallButton = styled(Button)`
  width: 24px;
  height: 23px;
`;

const OperatorButton = styled(Button)`
  flex: 1;
`;

const FeatureLabel = styled.label`
  padding-right: 2px;
`;

const CodeBox = styled.div`
  flex: 1;
  margin-top: 6px;
  border: 1px solid #b0b0b0;
  background: #fff;
  outline: none;
`;

const CodeLine = styled.div`
  padding-left: 1px;
  background: #efefef;
  color: #4271ae;
  font: 13px/18px "DejaVu Sans Mono", monospace;
  b { font-weight: 400; color: #8959a8; }
  i { font-style: normal; color: #718c00; }
`;

const Preview = styled.p`
  margin: 6px 0 0;
  line-height: 17px;
`;

const Splitter = styled.span<{ $width: number }>`
  flex: none;
  width: ${({ $width }) => $width}px;
  display: grid;
  place-items: center;
  &::after { content: ""; height: 18px; border-left: 1px dotted #b0b0b0; }
`;

const Functions = styled.div`
  display: flex;
  flex-direction: column;
  flex: none;
  width: 256px;
`;

const FunctionBox = styled.div`
  display: flex;
  flex: 1;
  margin-top: 6px;
  border: 1px solid #b0b0b0;
  background: #fff;
`;

const FunctionList = styled.ul`
  flex: 1;
  margin: 0;
  padding: 0;
  list-style: none;
  li { display: flex; align-items: center; height: 17px; line-height: 17px; }
  li > span:first-child { margin: 0 7px 0 8px; }
  li > span:last-child { flex: 1; padding-left: 4px; background: #c0c0c0; }
`;

const Scroll = styled.div`
  display: flex;
  flex-direction: column;
  width: 14px;
  border-left: 1px solid #c8c8c8;
  background: #e2e2e2;
  button { display: grid; place-items: center; height: 14px; background: #fafafa; }
`;

const Thumb = styled.span`
  flex: 1;
  margin-bottom: 42px;
  border: solid #bdbdbd;
  border-width: 1px 0;
  background: #fbfbfb;
`;

const HelpPane = styled.div`
  flex: 1;
  border: 1px solid #b0b0b0;
  background: #fff;
`;

const DialogFoot = styled.footer`
  display: flex;
  align-items: center;
  flex: none;
  height: 43px;
  padding: 11px 3px 0;
`;

const FootButton = styled(Button)<{ $width: number; $push?: boolean; $after?: number }>`
  width: ${({ $width }) => $width}px;
  margin-left: ${({ $push }) => ($push ? "auto" : "0")};
  margin-right: ${({ $after = 0 }) => $after}px;
  gap: 1px;
`;

const operators = ["=", "+", "-", "/", "*", "^", "||", "(", ")", "'\\n'"];

const functionGroups = [
  "Agregados", "Cadena", "Campos y valores", "Capas de mapa", "Capas de mapa", "Color",
  "Concordancia aproximada", "Condicionales", "Conversiones", "Fecha y Hora", "Files and Paths",
  "General", "Geometría", "Mapas", "Matemáticas", "Matrices", "Operadores", "Rásters", "Reciente (selection)",
];

const ExpressionDialog = () => (
  <Dialog role="dialog" aria-labelledby="dlg-title">
    <DialogTitle>
      <h1 id="dlg-title">RedVialComunasSantiago — Select by Expression</h1>
      <CloseRound aria-label="Cerrar ventana">
        <svg width="9" height="9" viewBox="0 0 9 9"><path d="M1 1l7 7M8 1L1 8" stroke="#fff" strokeWidth="1.500" /></svg>
      </CloseRound>
    </DialogTitle>
    <Tabs role="tablist">
      <Tab role="tab" aria-selected $active>Expresión</Tab>
      <Tab role="tab">Editor de funciones</Tab>
    </Tabs>
    <DialogBody>
      <Editor>
        <ButtonRow>
          {["newFile", "save", "-edit", "-trash", "download", "upload"].map((n) => (
            <SmallButton key={n} disabled={n[0] === "-"} aria-label={n.replace("-", "")}>
              <Icon name={n.replace("-", "")} size={16} />
            </SmallButton>
          ))}
        </ButtonRow>
        <CodeBox role="textbox" aria-label="Expresión" contentEditable suppressContentEditableWarning spellCheck={false}>
          <CodeLine>FNODE_<b>=</b> <i>'18027'</i></CodeLine>
        </CodeBox>
        <ButtonRow $top={6}>
          {operators.map((op, i) => <OperatorButton key={op} $focus={i === 0}>{op}</OperatorButton>)}
        </ButtonRow>
        <ButtonRow $top={9} $gap={7}>
          <FeatureLabel htmlFor="feature">Objeto espacial</FeatureLabel>
          <ComboShell>
            <FeatureInput id="feature" defaultValue="GUAS ANDINAS" />
            <ComboArrows><Caret /></ComboArrows>
          </ComboShell>
          <SmallButton disabled aria-label="Anterior"><svg width="16" height="16" viewBox="0 0 16 16"><path d="M12 1v14L4 8z" fill="#777" /></svg></SmallButton>
          <SmallButton aria-label="Siguiente"><svg width="16" height="16" viewBox="0 0 16 16"><path d="M4 1v14l9-7z" fill="#5f8fc9" stroke="#36597f" /></svg></SmallButton>
        </ButtonRow>
        <Preview>Previsualizar:&ensp;0</Preview>
      </Editor>
      <Splitter $width={22} />
      <Functions>
        <ButtonRow $gap={6}>
          <SearchBox $width={144}><Icon name="search" size={14} /><Field placeholder="Buscar…" aria-label="Buscar" /></SearchBox>
          <OperatorButton disabled>Mostrar ayuda</OperatorButton>
        </ButtonRow>
        <FunctionBox>
          <FunctionList>
            {functionGroups.map((g, i) => <li key={i}><Caret $dir="right" $size={3} /><span>{g}</span></li>)}
          </FunctionList>
          <Scroll>
            <button aria-label="Subir"><Caret $dir="up" $size={3} /></button>
            <Thumb />
            <button aria-label="Bajar"><Caret $size={3} /></button>
          </Scroll>
        </FunctionBox>
      </Functions>
      <Splitter $width={13} />
      <HelpPane />
    </DialogBody>
    <DialogFoot>
      <FootButton $width={80}><Icon name="help" size={16} />Ayuda</FootButton>
      <FootButton $width={240} $push><Icon name="expSelect" size={16} />Seleccionar objetos espaciales</FootButton>
      <FootButton $width={13} $after={12} aria-label="Opciones de selección"><Caret $size={3} /></FootButton>
      <FootButton $width={80}><span><u>C</u>errar</span></FootButton>
    </DialogFoot>
  </Dialog>
);

/* -------------------------------------------------------------- assembly */

const qgisMenu = ["Pro_yecto", "_Editar", "_Ver", "_Capa", "Con_figuración", "Co_mplementos", "Vect_orial", "_Ráster", "Base de _datos", "_Web", "_Malla", "Pro_cesos", "A_yuda"];

const MenuLabel = ({ text }: { text: string }) => {
  const at = text.indexOf("_");
  return <span>{text.slice(0, at)}<u>{text[at + 1]}</u>{text.slice(at + 2)}</span>;
};

const dots = [[674.5, 366.5], [676.5, 502], [602.5, 642], [490.500, 781.500], [566.500, 781], [604.500, 780]];

const DockButtons = () => (
  <>
    <MiniButton aria-label="Flotar"><svg width="7" height="7" viewBox="0 0 7 7"><path d="M2.500 .5h4v4h-4zM.5 2.500h4v4h-4z" fill="none" stroke="#555" /></svg></MiniButton>
    <MiniButton aria-label="Cerrar panel"><svg width="7" height="7" viewBox="0 0 7 7"><path d="M1 1l5 5M6 1L1 6" stroke="#333" strokeWidth="1.600" /></svg></MiniButton>
  </>
);

const TreeTools = ({ names, gap }: { names: string; gap: number }) => (
  <PanelTools $gap={gap}>
    {names.split(" ").map((n, i) => {
      if (n === "/") return <PanelSep key={i} />;
      if (n === "v") return <button key={i} aria-label="Más opciones"><Caret $size={3} /></button>;
      return <button key={i} disabled={n[0] === "-"} aria-label={n.replace("-", "")}><Icon name={n.replace("-", "")} size={16} /></button>;
    })}
  </PanelTools>
);

const SpinArrows = () => <SpinColumn><Caret $dir="up" $size={3} /><Caret $size={3} /></SpinColumn>;

const LocatorField = styled(Field)`
  font-size: 14px;
`;

const CoordField = styled(Field)`
  width: 130px;
`;

const ResultsShell = styled.div`
  display: flex;
  flex: 1;
  flex-direction: column;
  padding-left: 7px;
`;

const ResultsPanel = () => (
  <ResultsShell>
    <PanelTitle><span>Resultados de la identificación</span><DockButtons /></PanelTitle>
    <TreeTools gap={8} names="form / expand collapse expandNew / deselect / -copy -print / identifyMode v wrench" />
    <ResultBox>
      <ResultTable>
        <thead><tr><th>Objeto espacial</th><th>Valor</th></tr></thead>
        <tbody>
          {results.map(([name, value, depth, caret], i) => (
            <ResultRow key={i} $depth={depth} $bold={i === 0} $selected={i === 1}>
              <td><Twist>{caret && <Caret $dir={caret} $size={3} />}</Twist>{name}</td>
              <td>{value}</td>
            </ResultRow>
          ))}
        </tbody>
      </ResultTable>
    </ResultBox>
    <ResultFoot>
      <ComboShell $width={200}><select aria-label="Vista" /><ComboArrows><Caret /></ComboArrows></ComboShell>
      <FootButton $width={58}>Ayuda</FootButton>
    </ResultFoot>
  </ResultsShell>
);

export default function App() {
  return (
    <>
      <GlobalStyle />
      <Screen>
        <HostTitle>
          <Icon name="vbox" size={20} />
          <span>ubuntu1 [Corriendo] - Oracle VM VirtualBox</span>
          <HostControls>
            <button aria-label="Minimizar"><svg width="12" height="12" viewBox="0 0 12 12"><path d="M0 6.500h12" stroke="#000" /></svg></button>
            <button aria-label="Restaurar"><svg width="12" height="12" viewBox="0 0 12 12"><path d="M.5 2.500h9v9h-9zM2.500 2.500v-2h9v9h-2" fill="none" stroke="#000" /></svg></button>
            <button aria-label="Cerrar"><svg width="13" height="13" viewBox="0 0 13 13"><path d="M.5 .5l12 12M12.500 .5l-12 12" stroke="#000" /></svg></button>
          </HostControls>
        </HostTitle>
        <HostMenu>
          {["Archivo", "Máquina", "Ver", "Entrada", "Dispositivos", "Ayuda"].map((m) => <span key={m}>{m}</span>)}
        </HostMenu>
        <TopBar>
          <TopGroup>
            <span>Actividades</span>
            <AppMenu><Icon name="qgisGray" size={16} />QGIS Desktop<Caret $color="#eee" /></AppMenu>
          </TopGroup>
          <Clock>{"29 de jun  11:38"}<Dot /></Clock>
          <TopGroup $end $gap={12}>
            <Icon name="network" size={15} /><Icon name="volume" size={16} /><Icon name="battery" size={16} /><Caret $color="#eee" />
          </TopGroup>
        </TopBar>
        <Desktop>
          <Dock>
            {dockIcons.map((d) => (
              <DockButton key={d.name} $tone={d.tone} aria-label={d.name}>
                <svg width="46" height="46" viewBox="0 0 48 48">{d.art}</svg>
                {d.tone === "active" && <Running><i /><i /><i /></Running>}
              </DockButton>
            ))}
            <DockButton $last aria-label="Mostrar aplicaciones">
              <svg width="32" height="32" viewBox="0 0 32 32" fill="#f2f2f2">
                {[0, 1, 2].map((r) => [0, 1, 2].map((c) => <rect key={`${r}${c}`} x={1 + c * 12} y={1 + r * 12} width="6" height="6" rx="1.500" />))}
              </svg>
            </DockButton>
          </Dock>
          <Qgis>
            <QgisTitle>
              <span />
              <span>*Para_El_Marte — QGIS</span>
              <TitleControls>
                <button aria-label="Minimizar ventana"><svg width="8" height="8" viewBox="0 0 8 8"><path d="M0 6.500h8" stroke="#bbb" /></svg></button>
                <button aria-label="Restaurar ventana"><svg width="8" height="8" viewBox="0 0 8 8"><path d="M.5 2.500h5v5h-5zM2.500 .5h5v5" fill="none" stroke="#bbb" /></svg></button>
                <button aria-label="Cerrar ventana"><svg width="8" height="8" viewBox="0 0 8 8"><path d="M0 0l8 8M8 0L0 8" stroke="#eee" strokeWidth="1.400" /></svg></button>
              </TitleControls>
            </QgisTitle>
            <MenuBar>{qgisMenu.map((m) => <MenuLabel key={m} text={m} />)}</MenuBar>
            {toolbars.map((t) => <ToolRow key={t} spec={t} />)}
            <Work>
              <Panel $width={292} $after={7}>
                <PanelTitle><span>Capas</span><DockButtons /></PanelTitle>
                <TreeTools gap={9} names="brush addGroup eye filter epsilon v expand collapse remove" />
                <LayerTree>
                  {layers.map((l) => (
                    <LayerRow key={l.name} $selected={l.selected}>
                      <label>
                        <Check defaultChecked={l.on} />
                        <Swatch>
                          <svg width="16" height="16" viewBox="0 0 16 16">
                            {l.kind === "dot" && <circle cx="8" cy="8" r="3.500" fill={l.color} />}
                            {l.kind === "line" && <path d="M1 7.500h14" stroke={l.color} strokeWidth="1.500" />}
                            {l.kind === "fill" && <rect x=".5" y=".5" width="15" height="15" fill={l.color} stroke="#555" />}
                          </svg>
                        </Swatch>
                        <LayerName $on={l.on} $selected={l.selected}>{l.name}</LayerName>
                        {l.temp && (
                          <svg width="18" height="18" viewBox="0 0 18 18"><rect width="18" height="18" rx="2" fill="#ececec" /><path d="M4.500 3v12M7.500 3v12M10.500 3v12M13.500 3v12" stroke="#888" /><rect x="2.500" y="5.500" width="13" height="7" rx="1" fill="#eee" stroke="#666" /></svg>
                        )}
                      </label>
                    </LayerRow>
                  ))}
                </LayerTree>
                <DockTabs role="tablist">
                  <DockTab role="tab" aria-selected $active>Capas</DockTab>
                  <DockTab role="tab">Navegador</DockTab>
                </DockTabs>
              </Panel>
              <Canvas>
                <MessageBar>
                  <svg width="25" height="16" viewBox="0 0 25 16"><rect x=".7" y="1.500" width="23" height="13" rx="1.500" fill="#fff" stroke="#222" strokeWidth="1.400" /><rect x="2" y="3" width="5" height="10" fill="#999" /><path d="M10 4v8M14 4v8" stroke="#111" strokeWidth="2.400" /></svg>
                  <svg width="20" height="20" viewBox="0 0 20 20"><path d="M3 2h14q2 0 2 2v8q0 2-2 2h-8l-4 5v-5H3q-2 0-2-2V4q0-2 2-2z" fill="#fff" stroke="#999" /></svg>
                  <span>2 matching feature(s) selected</span>
                  <button aria-label="Cerrar mensaje"><svg width="18" height="18" viewBox="0 0 18 18"><circle cx="9" cy="9" r="8.500" fill="#2e3436" /><path d="M5.500 5.500l7 7M12.500 5.500l-7 7" stroke="#fff" strokeWidth="2.600" /></svg></button>
                </MessageBar>
                <MapArea>
                  <svg viewBox="303 241.500 879 594" preserveAspectRatio="none" aria-label="Mapa">
                    <g fill="none" stroke="#0a1f30" strokeWidth="1.200">
                      <path d="M303 340L396 342.500 717 354 732 353.500 1182 370" />
                      <path d="M303 484L391 487M728 497L750 499 850 502.500" />
                      <path d="M303 627.500L384 629.500 705 638.500 752 645.500 850 648.500" />
                      <path d="M303 774.500L600 783.500 850 791.500" />
                      <path d="M391 487L384 630 377 836" />
                      <path d="M735 241L732 354 728 497 722 641 716 787 715 836" />
                    </g>
                    <path d="M396 342.500L391 487 714 497.500 728 497" fill="none" stroke="#f4f125" strokeWidth="1.300" />
                    {dots.map(([x, y]) => <circle key={`${x}-${y}`} cx={x} cy={y} r="3.500" fill="#80d410" stroke="#3d8a3a" strokeWidth=".4" />)}
                  </svg>
                </MapArea>
              </Canvas>
              <Panel $width={473}>
                <ResultsPanel />
              </Panel>
            </Work>
            <StatusBar>
              <SearchBox $width={354}><Icon name="search" size={14} /><LocatorField placeholder="Escriba para localizar (Ctrl+K)" aria-label="Localizar" /></SearchBox>
              <StatusMessage>2 feature(s) selected on layer RedVialComunasSantiago.</StatusMessage>
              <StatusGroup>Coordenada<CoordField defaultValue="338052.2,6302206.6" /></StatusGroup>
              <StatusGroup $before={4}><Icon name="bug" size={16} /></StatusGroup>
              <StatusGroup $before={12}>Escala<ComboShell $width={97}><select><option>1:748</option></select><ComboArrows><Caret /></ComboArrows></ComboShell></StatusGroup>
              <StatusGroup $before={10}><Icon name="lock" size={16} /></StatusGroup>
              <StatusGroup>Amplificador<ComboShell $width={98}><input defaultValue="100%" /><SpinArrows /></ComboShell></StatusGroup>
              <StatusGroup $before={10} $gap={8}>Rotación<ComboShell $width={94}><input defaultValue="0,0 °" /><SpinArrows /></ComboShell></StatusGroup>
              <StatusGroup $gap={4}><Check defaultChecked />Representar</StatusGroup>
              <StatusGroup $before={14} $gap={2}><Icon name="crs" size={15} />EPSG:32719</StatusGroup>
              <StatusGroup $before={24}><Icon name="chat" size={16} /></StatusGroup>
            </StatusBar>
            <ExpressionDialog />
          </Qgis>
        </Desktop>
        <HostStatus>
          {["hdd", "disc", "audio", "display", "usb", "shared", "screen", "windows", "cpu", "mouse", "capture"].map((n) => <Icon key={n} name={n} size={19} />)}
          <span>CTRL DERECHA</span>
        </HostStatus>
        <HostEdge />
      </Screen>
    </>
  );
}
